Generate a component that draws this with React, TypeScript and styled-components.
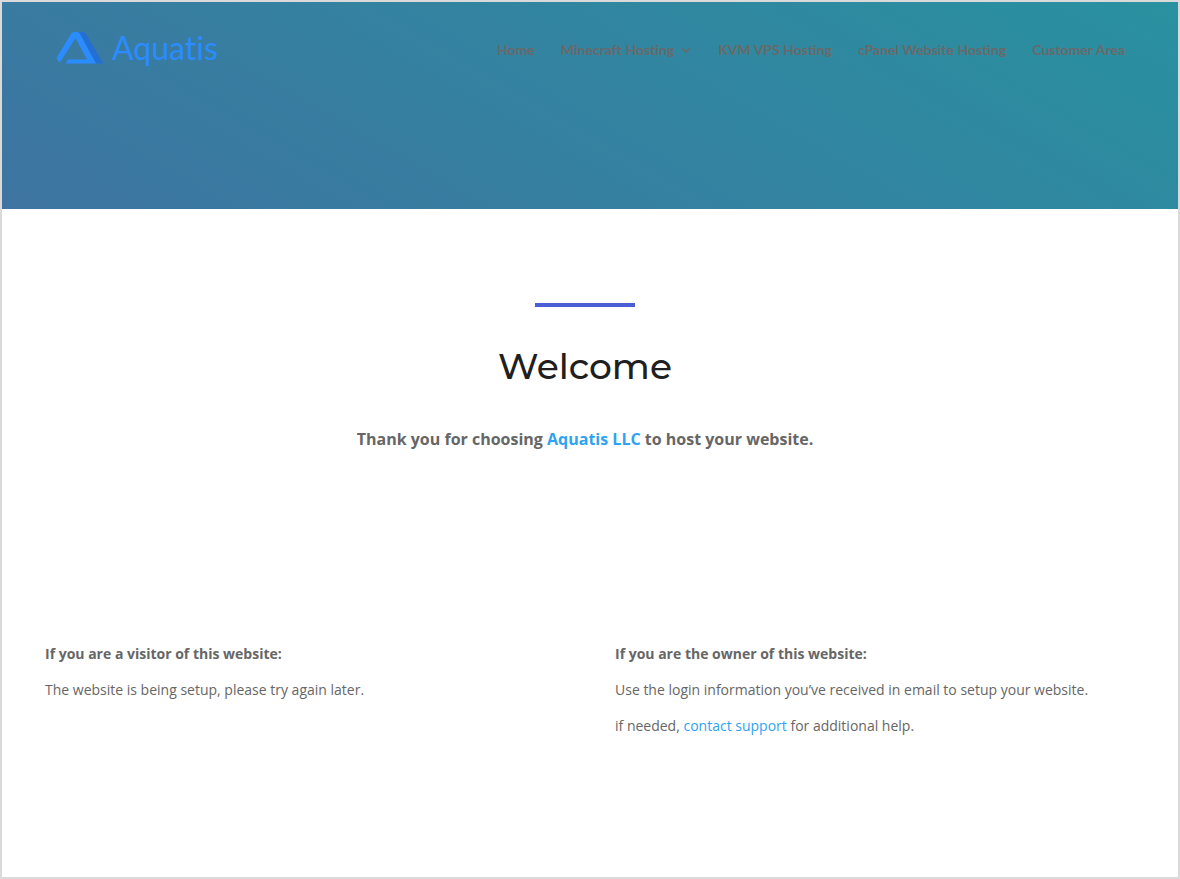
import React from "react";
import styled, { createGlobalStyle } from "styled-components";

const GlobalStyle = createGlobalStyle`
  *, *::before, *::after { box-sizing: border-box; }
  body {
    margin: 0;
    background: #fff;
    color: #666;
    font-family: "Open Sans", "Noto Sans", sans-serif;
    font-size: 14px;
    line-height: 24px;
  }
  a { color: #2ea3f2; text-decoration: none; }
`;

const Page = styled.div`
  min-height: 100vh;
  border: 2px solid #dadada;
`;

const Header = styled.header`
  display: flex;
  align-items: flex-start;
  justify-content: space-between;
  padding: 24px 53px 119px 52px;
  min-height: 207px;
  background: linear-gradient(30deg, #3e74a1 0%, #2991a0 100%);
`;

const Brand = styled.a`
  display: flex;
  align-items: center;
  gap: 8px;
  height: 44px;
  color: #2b8cff;
  font-family: Lato, sans-serif;
  font-size: 32px;
  font-variant-ligatures: none;
  line-height: 44px;
`;

const Menu = styled.nav`
  display: flex;
  align-items: center;
  gap: 26px;
  height: 48px;
`;

const MenuLink = styled.a`
  display: flex;
  align-items: center;
  gap: 6px;
  color: #696969;
  font-family: Lato, sans-serif;
  font-weight: 700;
  font-variant-ligatures: none;
  line-height: 16px;
`;

const Content = styled.main`
  padding: 94px 53px 128px 43px;
`;

const Intro = styled.section`
  display: flex;
  flex-direction: column;
  align-items: center;
  text-align: center;
`;

const Rule = styled.hr`
  width: 100px;
  height: 4px;
  margin: 0 0 36px;
  border: 0;
  background: #4b5ed3;
`;

const Title = styled.h1`
  margin: 0 0 38px;
  color: #1f1f1f;
  font-family: Montserrat, Inter, sans-serif;
  font-size: 36px;
  font-weight: 500;
  line-height: 46px;
`;

const Lead = styled.p`
  margin: 0;
  font-size: 16px;
  font-weight: 700;
`;

const Columns = styled.section`
  display: grid;
  grid-template-columns: 1fr 1fr;
  gap: 60px;
  margin-top: 191px;
`;

const Column = styled.div`
  display: flex;
  flex-direction: column;
  gap: 12px;
`;

const ColumnTitle = styled.h2`
  margin: 0;
  font-size: 14px;
  font-weight: 700;
  line-height: 24px;
`;

const Text = styled.p`
  margin: 0;
`;

const Logo = () => (
  <svg width="50" height="36" viewBox="0 0 50 36" aria-hidden="true">
    <path d="M24 2H29Q31 2 32 4L49.500 33.500H38Z" fill="#2470d2" />
    <path
      d="M5 32L2.500 28L17 4Q18 2 20 2H23Q25 2 26 4L42 33.500H11.500L14 29.500H33L21.500 8L6.500 31.500Z"
      fill="#2b8cff"
    />
  </svg>
);

const Chevron = () => (
  <svg width="12" height="6" viewBox="0 0 12 6" fill="none" aria-hidden="true">
    <path d="M2 1l4 4 4-4" stroke="#696969" strokeWidth="1.5" />
  </svg>
);

const menu = [
  { label: "Home" },
  { label: "Minecraft Hosting", hasChildren: true },
  { label: "KVM VPS Hosting" },
  { label: "cPanel Website Hosting" },
  { label: "Customer Area" },
];

export default function App() {
  return (
    <>
      <GlobalStyle />
      <Page>
        <Header>
          <Brand href="#">
            <Logo />
            Aquatis
          </Brand>
          <Menu aria-label="Main">
            {menu.map((item) => (
              <MenuLink key={item.label} href="#">
                {item.label}
                {item.hasChildren && <Chevron />}
              </MenuLink>
            ))}
          </Menu>
        </Header>
        <Content>
          <Intro>
            <Rule />
            <Title>Welcome</Title>
            <Lead>
              Thank you for choosing <a href="#">Aquatis LLC</a> to host your website.
            </Lead>
          </Intro>
          <Columns>
            <Column>
              <ColumnTitle>If you are a visitor of this website:</ColumnTitle>
              <Text>The website is being setup, please try again later.</Text>
            </Column>
            <Column>
              <ColumnTitle>If you are the owner of this website:</ColumnTitle>
              <Text>Use the login information you’ve received in email to setup your website.</Text>
              <Text>
                if needed, <a href="#">contact support</a> for additional help.
              </Text>
            </Column>
          </Columns>
        </Content>
      </Page>
    </>
  );
}
